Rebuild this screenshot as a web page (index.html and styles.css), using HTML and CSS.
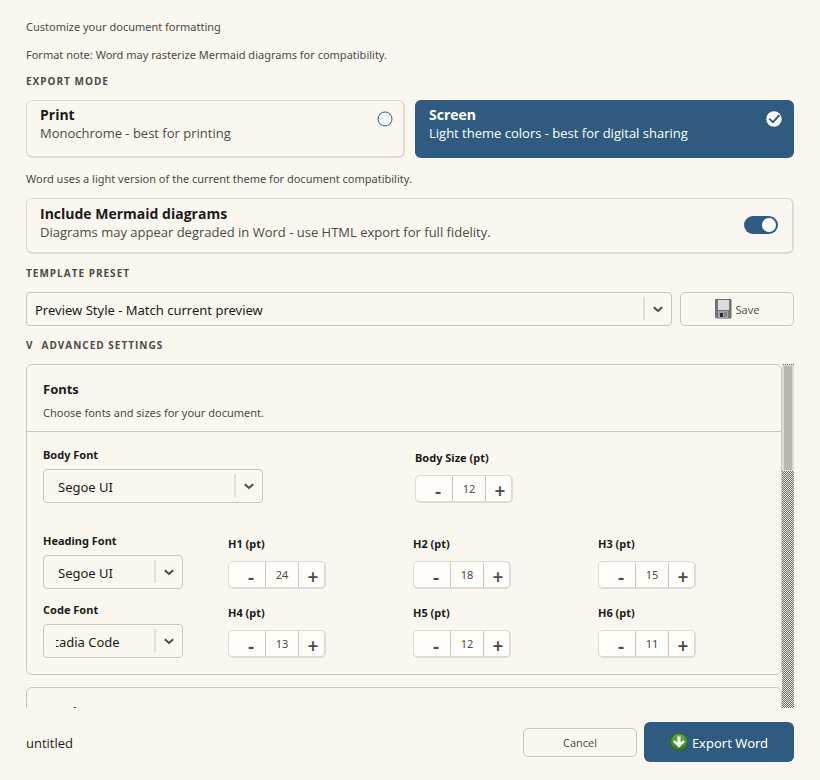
FILE: index.html
```html
<!DOCTYPE html>
<html lang="en">
<head>
  <meta charset="UTF-8">
  <meta name="viewport" content="width=device-width, initial-scale=1.0">
  <title>Export Word</title>
  <link rel="stylesheet" href="styles.css">
</head>
<body>
  <!-- Shared chevron -->
  <svg class="defs" aria-hidden="true">
    <symbol id="chevron" viewBox="0 0 10 7">
      <path d="M0.8 1.2 L5 5 L9.2 1.2" fill="none" stroke="#4d4944" stroke-width="2"/>
    </symbol>
  </svg>

  <form class="dialog">
    <p class="note intro">Customize your document formatting</p>
    <p class="note">Format note: Word may rasterize Mermaid diagrams for compatibility.</p>

    <h2 class="section-label">EXPORT MODE</h2>
    <div class="modes">
      <label class="option-card">
        <span class="option-text">
          <span class="option-title">Print</span>
          <span class="option-desc">Monochrome - best for printing</span>
        </span>
        <input type="radio" name="mode" value="print">
        <svg class="mark" viewBox="0 0 16 16"><circle cx="8" cy="8" r="7" fill="none" stroke="#2e5b7f" stroke-width="1"/></svg>
      </label>
      <label class="option-card selected">
        <span class="option-text">
          <span class="option-title">Screen</span>
          <span class="option-desc">Light theme colors - best for digital sharing</span>
        </span>
        <input type="radio" name="mode" value="screen" checked>
        <svg class="mark" viewBox="0 0 16 16"><circle cx="8" cy="8" r="7.7" fill="#fff"/><path d="M3.2 7.6 L7 11.2 L13.4 4" fill="none" stroke="#2e5b7f" stroke-width="1.9"/></svg>
      </label>
    </div>
    <p class="note mode-note">Word uses a light version of the current theme for document compatibility.</p>

    <label class="option-card mermaid">
      <span class="option-text">
        <span class="option-title">Include Mermaid diagrams</span>
        <span class="option-desc">Diagrams may appear degraded in Word - use HTML export for full fidelity.</span>
      </span>
      <input type="checkbox" class="toggle" checked>
    </label>

    <h2 class="section-label">TEMPLATE PRESET</h2>
    <div class="preset-row">
      <span class="select-box preset">
        <select aria-label="Template preset">
          <option>Preview Style - Match current preview</option>
        </select>
        <svg class="chevron"><use href="#chevron"/></svg>
      </span>
      <button type="button" class="btn save">
        <svg class="icon-save" viewBox="0 0 17 20">
          <path d="M0.5 0.5 H16 V19 H1.5 L0.5 18 Z" fill="#77777a" stroke="#6a6a6d"/>
          <rect x="3" y="1" width="11" height="10" fill="#dcdcdc"/>
          <rect x="3" y="12" width="10" height="7" fill="#a2a2a2"/>
          <rect x="5" y="14" width="3" height="4" fill="#2d2d2d"/>
          <rect x="9" y="13" width="3" height="5" fill="#858585"/>
        </svg>
        Save
      </button>
    </div>

    <h2 class="section-label"><button type="button" class="expander"><span>V</span><span>ADVANCED SETTINGS</span></button></h2>
    <div class="scroll-area">
      <div class="scroll-content">
        <section class="panel">
          <header class="panel-head">
            <h3>Fonts</h3>
            <p class="note">Choose fonts and sizes for your document.</p>
          </header>
          <div class="panel-body">
            <div class="grid body-grid">
              <div class="field">
                <label for="bodyFont">Body Font</label>
                <span class="select-box wide">
                  <select id="bodyFont"><option>Segoe UI</option></select>
                  <svg class="chevron"><use href="#chevron"/></svg>
                </span>
              </div>
              <div class="field size">
                <label for="bodySize">Body Size (pt)</label>
                <div class="stepper"><button type="button">-</button><input id="bodySize" value="12"><button type="button">+</button></div>
              </div>
            </div>
            <div class="grid heading-grid">
              <div class="field">
                <label for="headingFont">Heading Font</label>
                <span class="select-box">
                  <select id="headingFont"><option>Segoe UI</option></select>
                  <svg class="chevron"><use href="#chevron"/></svg>
                </span>
              </div>
              <div class="field size">
                <label for="h1Size">H1 (pt)</label>
                <div class="stepper"><button type="button">-</button><input id="h1Size" value="24"><button type="button">+</button></div>
              </div>
              <div class="field size">
                <label for="h2Size">H2 (pt)</label>
                <div class="stepper"><button type="button">-</button><input id="h2Size" value="18"><button type="button">+</button></div>
              </div>
              <div class="field size">
                <label for="h3Size">H3 (pt)</label>
                <div class="stepper"><button type="button">-</button><input id="h3Size" value="15"><button type="button">+</button></div>
              </div>
              <div class="field">
                <label for="codeFont">Code Font</label>
                <span class="select-box">
                  <select id="codeFont" class="scrolled"><option>Cascadia Code</option></select>
                  <svg class="chevron"><use href="#chevron"/></svg>
                </span>
              </div>
              <div class="field size">
                <label for="h4Size">H4 (pt)</label>
                <div class="stepper"><button type="button">-</button><input id="h4Size" value="13"><button type="button">+</button></div>
              </div>
              <div class="field size">
                <label for="h5Size">H5 (pt)</label>
                <div class="stepper"><button type="button">-</button><input id="h5Size" value="12"><button type="button">+</button></div>
              </div>
              <div class="field size">
                <label for="h6Size">H6 (pt)</label>
                <div class="stepper"><button type="button">-</button><input id="h6Size" value="11"><button type="button">+</button></div>
              </div>
            </div>
          </div>
        </section>
        <section class="panel">
          <header class="panel-head">
            <h3>Spacing</h3>
          </header>
        </section>
      </div>
      <div class="scrollbar"><div class="thumb"></div></div>
    </div>

    <footer class="footer">
      <span class="filename">untitled</span>
      <button type="button" class="btn cancel">Cancel</button>
      <button type="submit" class="btn export">
        <svg class="icon-export" viewBox="0 0 18 18">
          <defs>
            <linearGradient id="green" x1="0" y1="0" x2="0" y2="1">
              <stop offset="0" stop-color="#6cb33c"/>
              <stop offset="1" stop-color="#2f7d1c"/>
            </linearGradient>
          </defs>
          <circle cx="9" cy="9" r="8.4" fill="url(#green)" stroke="#2b6a1c" stroke-width="1"/>
          <path d="M7.5 3.5 H10.5 V9.2 L13.4 7.2 L15 8.8 L9 14.8 L3 8.8 L4.6 7.2 L7.5 9.2 Z" fill="#fff"/>
        </svg>
        <span>Export Word</span>
      </button>
    </footer>
  </form>
</body>
</html>
```
FILE: styles.css
```css
* {
  box-sizing: border-box;
}

body {
  margin: 0;
  background-color: #faf7f0;
  color: #1c1a18;
  font-family: "Noto Sans", "Open Sans", sans-serif;
  font-size: 13px;
}

h2, h3, p {
  margin: 0;
}

button, input, select {
  font-family: inherit;
  margin: 0;
}

.defs {
  display: none;
}

.dialog {
  display: flex;
  flex-direction: column;
  height: 100vh;
  padding: 18px 26px;
}

.note {
  color: #4d4944;
  font-size: 11px;
  line-height: 18px;
}

.intro {
  margin-bottom: 10px;
}

.section-label {
  margin: 12px 0;
  color: #4d4944;
  font-family: "Open Sans", sans-serif;
  font-size: 10px;
  font-weight: bold;
  letter-spacing: 1px;
  line-height: 14px;
}

.note + .section-label {
  margin-top: 10px;
}

/* Export mode cards */
.modes {
  display: grid;
  grid-template-columns: 1fr 1fr;
  gap: 10px;
}

.option-card {
  display: flex;
  justify-content: space-between;
  min-height: 58px;
  padding: 5px 10px 6px 13px;
  border: 1px solid #dfdbd3;
  border-bottom-width: 2px;
  border-right-width: 2px;
  border-radius: 6px;
  font-family: "Open Sans", sans-serif;
}

.option-card.selected {
  background-color: #2e5b7f;
  border-color: #2e5b7f;
  color: #fff;
}

.option-text {
  display: flex;
  flex-direction: column;
  align-self: flex-start;
}

.option-title {
  font-size: 14px;
  font-weight: bold;
  line-height: 18px;
}

.option-desc {
  color: #4d4944;
  line-height: 18px;
}

.selected .option-desc {
  color: #fff;
}

.option-card input[type="radio"] {
  position: absolute;
  opacity: 0;
}

.mark {
  width: 16px;
  height: 16px;
  margin-top: 5px;
}

.mode-note {
  margin: 12px 0 10px;
}

.option-card.mermaid {
  min-height: 56px;
  align-items: center;
  padding: 6px 14px 7px 13px;
}

/* On/off switch */
.toggle {
  appearance: none;
  display: flex;
  width: 34px;
  height: 18px;
  padding: 2px;
  border-radius: 9px;
  background-color: #2e5b7f;
}

.toggle:checked {
  justify-content: flex-end;
}

.toggle::before {
  content: "";
  width: 14px;
  height: 14px;
  border-radius: 50%;
  background-color: #fff;
}

/* Drop-downs */
.select-box {
  position: relative;
  display: block;
  width: 140px;
}

.select-box.wide {
  width: 220px;
}

.select-box.preset {
  flex: 1;
}

.select-box select {
  appearance: none;
  display: block;
  width: 100%;
  height: 34px;
  padding: 2px 36px 0 14px;
  border: 1px solid #cbc7bf;
  border-radius: 4px;
  background-color: transparent;
  color: #1c1a18;
  font-size: 13px;
}

.select-box.preset select {
  padding-left: 8px;
}

.select-box .scrolled {
  padding-left: 12px;
  text-indent: -25px;
}

.select-box::after {
  content: "";
  position: absolute;
  top: 5px;
  bottom: 6px;
  right: 27px;
  width: 2px;
  background-color: #e3dfd7;
}

.chevron {
  position: absolute;
  top: 14px;
  right: 9px;
  width: 10px;
  height: 7px;
  pointer-events: none;
}

.preset-row {
  display: flex;
  gap: 8px;
}

.btn {
  display: flex;
  align-items: center;
  justify-content: center;
  border: 1px solid #cbc7bf;
  border-radius: 5px;
  background-color: transparent;
  color: #4d4944;
  font-size: 11px;
}

.save {
  width: 114px;
  gap: 4px;
  font-family: "Open Sans", sans-serif;
}

.icon-save {
  width: 17px;
  height: 20px;
}

.expander {
  display: flex;
  gap: 8px;
  padding: 0;
  border: none;
  background: none;
  color: inherit;
  font: inherit;
  letter-spacing: inherit;
}

/* Advanced settings */
.scroll-area {
  display: flex;
  flex: 1;
  min-height: 0;
  overflow: hidden;
}

.scroll-content {
  flex: 1;
}

.scrollbar {
  width: 12px;
  background: repeating-conic-gradient(#6f6d69 0 25%, #e6e2da 0 50%) 0 0 / 2px 2px;
}

.thumb {
  height: 106px;
  margin-top: 1px;
  border: 2px solid #dfdbd3;
  border-top-width: 1px;
  border-bottom-width: 1px;
  background-color: #bbb7af;
}

.panel {
  margin-bottom: 12px;
  border: 1px solid #cbc7bf;
  border-radius: 6px;
}

.panel-head {
  padding: 15px 16px 9px;
  border-bottom: 1px solid #cbc7bf;
}

.panel-head h3 {
  margin-bottom: 6px;
  font-size: 13px;
  line-height: 18px;
}

.panel-body {
  padding: 14px 16px 16px;
}

.grid {
  display: grid;
}

.body-grid {
  grid-template-columns: 1fr 1fr;
  column-gap: 22px;
  margin-bottom: 29px;
}

.heading-grid {
  grid-template-columns: repeat(4, 1fr);
  gap: 12px 18px;
}

.field label {
  display: block;
  margin-bottom: 5px;
  font-size: 11px;
  font-weight: bold;
  line-height: 18px;
}

.field.size {
  padding-top: 3px;
}

.field.size label {
  margin-bottom: 8px;
}

.stepper {
  display: flex;
  width: 98px;
  height: 28px;
  border: 1px solid #dfdbd3;
  border-right-width: 2px;
  border-bottom-width: 2px;
  border-radius: 5px;
  background-color: #fffefb;
}

.stepper button {
  width: 25px;
  padding: 5px 0 0 3px;
  border: none;
  background: none;
  color: #4d4944;
  font-size: 19px;
  font-weight: 600;
  line-height: 18px;
}

.stepper button:first-child {
  width: 36px;
  padding-left: 8px;
}

.stepper input {
  flex: 1;
  min-width: 0;
  padding: 0;
  border: solid #cbc7bf;
  border-width: 0 1px;
  background: none;
  color: #4d4944;
  font-size: 11px;
  text-align: center;
}

/* Footer */
.footer {
  display: flex;
  align-items: center;
  gap: 7px;
  margin-top: 14px;
}

.filename {
  flex: 1;
  padding-top: 2px;
  font-family: "Open Sans", sans-serif;
}

.cancel {
  width: 114px;
  height: 29px;
  font-family: "Open Sans", sans-serif;
}

.export {
  width: 150px;
  height: 40px;
  gap: 4px;
  border: none;
  border-radius: 6px;
  background-color: #2e5b7f;
  color: #fff;
  font-size: 13px;
}

.export span {
  padding-top: 2px;
}

.icon-export {
  width: 18px;
  height: 18px;
}
```
